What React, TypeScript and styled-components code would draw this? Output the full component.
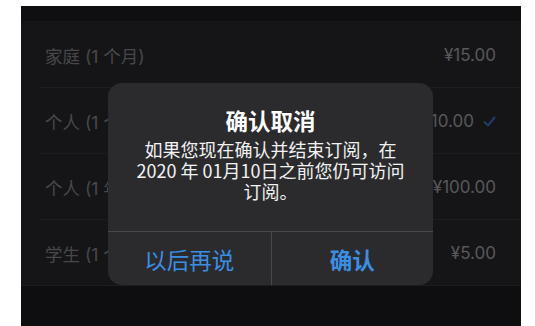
import React from "react";
import styled, { createGlobalStyle } from "styled-components";

const Global = createGlobalStyle`
  html, body { margin: 0; padding: 0; background: #ffffff; }
  body { font-family: "Inter", "Noto Sans CJK SC", sans-serif; }
`;

const Page = styled.div`
  width: 535px;
  height: 326px;
  padding: 6px 14px 0 21px;
  box-sizing: border-box;
`;

const Screen = styled.div`
  position: relative;
  width: 500px;
  height: 320px;
  background: #0f0f11;
  display: flex;
  flex-direction: column;
  overflow: hidden;
`;

const TopStrip = styled.div`
  height: 15px;
  background: #0f0f11;
  border-bottom: 1px solid #161618;
`;

const List = styled.div`
  background: #151517;
  display: flex;
  flex-direction: column;
`;

const Row = styled.div<{ $last?: boolean }>`
  position: relative;
  height: 66px;
  box-sizing: border-box;
  display: flex;
  align-items: center;
  justify-content: space-between;
  padding: 0 25px 0 24px;
  font-size: 17px;
  &::after {
    content: "";
    position: absolute;
    left: ${(p) => (p.$last ? "0" : "19px")};
    right: 0;
    bottom: 0;
    height: 1px;
    background: #1d1d1f;
  }
`;

const Label = styled.span`
  color: #48484a;
  font-size: 17.5px;
`;

const Price = styled.span`
  color: #58585a;
  display: flex;
  align-items: center;
  gap: 9px;
`;

const Bottom = styled.div`
  flex: 1;
  background: #0e0e10;
`;

const Dialog = styled.div`
  position: absolute;
  left: 87px;
  top: 77px;
  width: 325px;
  height: 202px;
  border-radius: 14px;
  background: #2b2b2d;
  display: flex;
  flex-direction: column;
  overflow: hidden;
  font-family: "Noto Sans CJK SC", sans-serif;
`;

const Body = styled.div`
  flex: 1;
  display: flex;
  flex-direction: column;
  align-items: center;
  padding: 23px 12px 0;
  text-align: center;
  color: #ffffff;
`;

const Title = styled.div`
  font-size: 22.5px;
  line-height: 28px;
  font-weight: 700;
`;

const Message = styled.div`
  margin-top: 5px;
  font-size: 18px;
  line-height: 21px;
  font-weight: 400;
  color: #f2f2f2;
`;

const Line = styled.div`
  white-space: nowrap;
`;

const Actions = styled.div`
  height: 53px;
  display: grid;
  grid-template-columns: 1fr 1fr;
  border-top: 1px solid #48484a;
`;

const Action = styled.button<{ $strong?: boolean }>`
  background: transparent;
  border: none;
  margin: 0;
  padding: 0;
  font-family: "Noto Sans CJK SC", sans-serif;
  font-size: 22.5px;
  font-weight: ${(p) => (p.$strong ? 600 : 400)};
  color: #3a8fe3;
  display: flex;
  align-items: center;
  justify-content: center;
  & + & {
    border-left: 1px solid #48484a;
  }
`;

const Check = () => (
  <svg width="13" height="11" viewBox="0 0 13 11">
    <path d="M1.5 6 L5 9.5 L11.5 1.5" fill="none" stroke="#1f3d66" strokeWidth="2" strokeLinecap="round" strokeLinejoin="round" />
  </svg>
);

const rows = [
  { label: "家庭 (1 个月)", price: "¥15.00" },
  { label: "个人 (1 个月)", price: "¥10.00", checked: true },
  { label: "个人 (1 年)", price: "¥100.00" },
  { label: "学生 (1 个月)", price: "¥5.00" },
];

export default function App() {
  return (
    <>
      <Global />
      <Page>
        <Screen>
          <TopStrip />
          <List>
            {rows.map((r, i) => (
              <Row key={i} $last={i === rows.length - 1}>
                <Label>{r.label}</Label>
                <Price>
                  {r.price}
                  {r.checked && <Check />}
                </Price>
              </Row>
            ))}
          </List>
          <Bottom />
          <Dialog>
            <Body>
              <Title>确认取消</Title>
              <Message>
                <Line>如果您现在确认并结束订阅，在</Line>
                <Line>2020 年 01月10日之前您仍可访问</Line>
                <Line>订阅。</Line>
              </Message>
            </Body>
            <Actions>
              <Action>以后再说</Action>
              <Action $strong>确认</Action>
            </Actions>
          </Dialog>
        </Screen>
      </Page>
    </>
  );
}
